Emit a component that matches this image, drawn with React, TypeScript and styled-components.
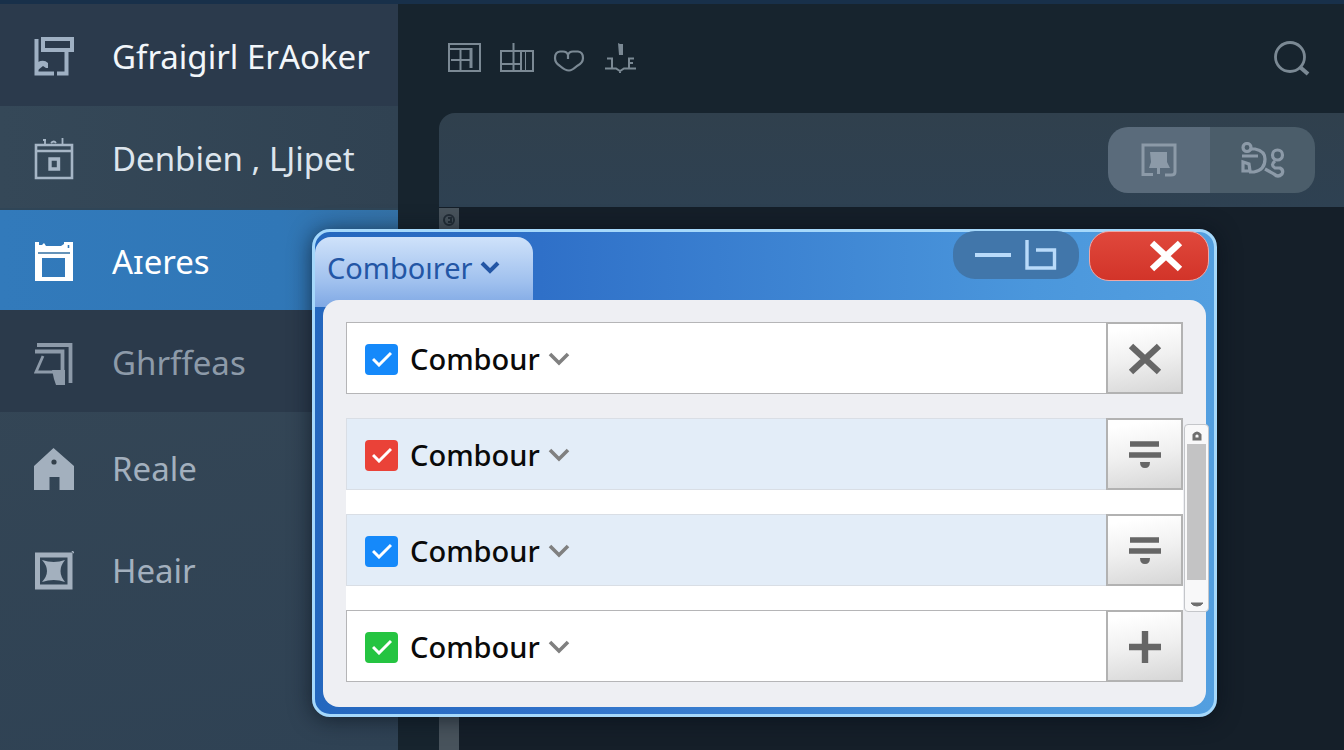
import React, { useState } from 'react';
import styled, { createGlobalStyle } from 'styled-components';

const GlobalStyle = createGlobalStyle`
  * { box-sizing: border-box; }
  body {
    margin: 0;
    background: #17222c;
    font-family: "Noto Sans", "Open Sans", sans-serif;
  }
  button {
    border: 0;
    padding: 0;
    background: none;
    color: inherit;
    font: inherit;
    cursor: pointer;
  }
  svg { display: block; }
`;

type Tone = 'plain' | 'active' | 'dark' | 'muted';

const Page = styled.div`
  position: relative;
  display: flex;
  min-height: 100vh;
  border-top: 4px solid #18304a;
  overflow: hidden;
`;

const Sidebar = styled.nav`
  flex: 0 0 398px;
  display: flex;
  flex-direction: column;
  background: linear-gradient(170deg, #384957, #2f4254);
`;

const NavGroup = styled.div`
  padding-top: 4px;
`;

const rowTones = {
  plain: 'background: linear-gradient(90deg, #354858, #304252); color: #dde5ed; svg { color: #a6b6c6; }',
  active: 'background: linear-gradient(90deg, #327abb, #3077b7 70%, #3573a8); color: #ffffff; border-top: 2px solid #2f4557;',
  dark: 'background: #2b3a4b; color: #8d9aa9;',
  muted: 'color: #a3b0be;',
};

const NavLink = styled.a<{ $tone: Tone }>`
  display: flex;
  align-items: center;
  gap: 38px;
  height: 102px;
  padding: 4px 0 0 34px;
  font-size: 33px;
  line-height: 40px;
  white-space: nowrap;
  text-decoration: none;
  ${p => rowTones[p.$tone]}
`;

const Brand = styled(NavLink)`
  background: #2b3a4c;
  color: #f2f6fa;
  svg { color: #9fb0c3; }
`;

const Main = styled.main`
  flex: 1;
  min-width: 0;
  display: flex;
  flex-direction: column;
  background: #17242e;
`;

const Toolbar = styled.header`
  display: flex;
  align-items: center;
  gap: 18px;
  height: 109px;
  padding: 0 34px 2px 50px;
  color: #7b8994;
`;

const Spacer = styled.span`
  flex: 1;
`;

const PanelBar = styled.div`
  display: flex;
  justify-content: flex-end;
  align-items: center;
  height: 94px;
  margin-left: 41px;
  padding-right: 29px;
  border-radius: 16px 0 0 0;
  background: linear-gradient(180deg, #30404d, #2e4152);
`;

const Segments = styled.div`
  display: flex;
  overflow: hidden;
  border-radius: 20px;
`;

const Segment = styled.button<{ $on?: boolean }>`
  display: grid;
  place-items: center;
  width: ${p => (p.$on ? 102 : 105)}px;
  height: 66px;
  background: ${p => (p.$on ? '#5a6b7b' : '#4b5d6a')};
  color: #8c9aa8;
`;

const Canvas = styled.section`
  flex: 1;
  display: flex;
  margin-left: 41px;
  padding-top: 1px;
  background: #151f29;
`;

const Rail = styled.div`
  width: 20px;
  padding: 4px 3px;
  background: #48535c;
  color: #222d36;
`;

const Dialog = styled.div`
  position: absolute;
  top: 225px;
  left: 312px;
  right: 127px;
  padding: 5px 8px 7px 8px;
  border: 3px solid #a5d8fb;
  border-radius: 18px;
  background: linear-gradient(90deg, #2467be, #2f70c8 25%, #4b97dc 80%, #539fe0);
  box-shadow: 0 2px 22px rgba(6, 14, 24, 0.65);
`;

const TitleBar = styled.div`
  display: flex;
  align-items: flex-start;
  height: 63px;
  margin: 0 -3px 0 -8px;
`;

const Tab = styled.button`
  display: flex;
  align-items: center;
  gap: 7px;
  width: 218px;
  height: 70px;
  padding: 0 0 8px 12px;
  border-radius: 16px 16px 0 0;
  background: linear-gradient(180deg, #cfe2fa, #9fc0ee 65%, #7fa8e4);
  color: #2356a5;
  font-size: 29px;
  line-height: 40px;
`;

const Controls = styled.div`
  display: flex;
  gap: 10px;
  margin-top: -6px;
`;

const PillGroup = styled.div`
  display: flex;
  align-items: center;
  gap: 14px;
  width: 126px;
  height: 48px;
  padding-left: 22px;
  border-radius: 22px;
  background: #4176aa;
  color: #b9dbfa;
`;

const CloseButton = styled.button`
  display: flex;
  align-items: center;
  justify-content: flex-end;
  width: 120px;
  height: 50px;
  padding-right: 25px;
  border: 1px solid #f0a7a5;
  border-radius: 20px;
  background: linear-gradient(180deg, #e0483c, #d23429);
  color: #ffffff;
`;

const Body = styled.div`
  position: relative;
  padding: 22px 23px 25px;
  border-radius: 16px;
  background: #eeeff3;
`;

const List = styled.ul`
  display: flex;
  flex-direction: column;
  gap: 24px;
  margin: 0;
  padding: 0;
  list-style: none;
  background: linear-gradient(180deg, #eeeff3 97px, #ffffff 97px);
`;

const Row = styled.li<{ $tinted: boolean }>`
  display: flex;
  height: 72px;
  border: 1px solid ${p => (p.$tinted ? '#d9dee5' : '#b5b5b7')};
  border-right: 0;
  background: ${p => (p.$tinted ? '#e3edf8' : '#ffffff')};
`;

const RowMain = styled.div`
  flex: 1;
  display: flex;
  align-items: center;
  gap: 8px;
  padding: 2px 0 0 18px;
  color: #808080;
`;

const CheckLabel = styled.label`
  display: flex;
  align-items: center;
  gap: 12px;
  color: #0a0a0a;
  font-size: 29px;
  line-height: 40px;
  font-weight: 500;
`;

const CheckStack = styled.span`
  display: grid;
  place-items: center;
  color: #ffffff;
  > * { grid-area: 1 / 1; }
  svg { pointer-events: none; }
`;

const Checkbox = styled.input<{ $color: string }>`
  appearance: none;
  width: 33px;
  height: 31px;
  margin: 0;
  border-radius: 4px;
  background: ${p => p.$color};
`;

const RowAction = styled.button`
  display: grid;
  place-items: center;
  width: 77px;
  margin: -1px 0;
  padding-top: 2px;
  border: 2px solid #b2b2b2;
  background: linear-gradient(170deg, #ffffff 10%, #f0f0f0 50%, #d6d6d6);
  color: #666666;
`;

const ScrollTrack = styled.div`
  position: absolute;
  top: 124px;
  right: -3px;
  display: flex;
  flex-direction: column;
  align-items: center;
  width: 25px;
  height: 188px;
  padding: 6px 2px 4px;
  border: 1px solid #c4c6ca;
  border-radius: 4px;
  background: #f8f8f9;
  color: #6e6e6e;
`;

const ScrollThumb = styled.div`
  width: 19px;
  height: 136px;
  margin-top: 3px;
  background: #c3c3c4;
`;

type IconProps = { w: number; h: number; sw?: number; children: React.ReactNode };

const Icon = ({ w, h, sw = 2, children }: IconProps) => (
  <svg width={w} height={h} viewBox={`0 0 ${w} ${h}`} fill="none" stroke="currentColor" strokeWidth={sw} aria-hidden="true">
    {children}
  </svg>
);

const BrandIcon = () => (
  <Icon w={40} h={42} sw={4}>
    <path d="M2.500 3V37.500H20" />
    <path d="M9 3H38V14H9Z" />
    <path d="M32.500 15V37.500H23" />
    <path d="M4 26q6-3 10 1v5h-2l-3-2-5 4z" fill="currentColor" stroke="none" />
  </Icon>
);

const CalendarIcon = () => (
  <Icon w={40} h={42} sw={2.6}>
    <path d="M2 7H38V40H2Z" />
    <path d="M2 13H38" />
    <path d="M16 21H24.500V31H16Z" strokeWidth="3.4" />
    <path d="M11 1v5M28.500 0v6M9 2h3M17 5q3-3 5 0" strokeWidth="1.8" />
  </Icon>
);

const ArchiveIcon = () => (
  <Icon w={40} h={42}>
    <path
      d="M1 1H5V4H8L10 2L12 5H27L30 3V1H39V40H1ZM8 17V36H31V17Z"
      fill="currentColor"
      fillRule="evenodd"
      stroke="none"
    />
    <path d="M4 12H36" stroke="#3f78a8" strokeWidth="1.6" />
    <path d="M34.500 4v3" stroke="#327abb" strokeWidth="1.6" />
  </Icon>
);

const LayersIcon = () => (
  <Icon w={40} h={43} sw={3.8}>
    <path d="M3 3H36.500V41" />
    <path d="M1 9.500H28.500V31" />
    <path d="M9 14L2 30H21" strokeWidth="2.8" />
    <path d="M18 28H31V43H22L20 37Z" fill="currentColor" stroke="none" />
  </Icon>
);

const HouseIcon = () => (
  <Icon w={40} h={42}>
    <path d="M0 18L19.500 0L40 18V42H25.500V29H15.500V42H0Z" fill="currentColor" stroke="none" />
    <circle cx="20" cy="14" r="2.600" fill="#34404b" stroke="none" />
  </Icon>
);

const FrameIcon = () => (
  <Icon w={40} h={40} sw={5}>
    <path d="M3.500 4H36V36H3.500Z" />
    <path d="M8 9Q20 13 31 9Q22 20 31 31Q20 27 8 31Q18 20 8 9Z" fill="currentColor" stroke="none" />
    <path d="M38 0l2 2" strokeWidth="1.500" />
  </Icon>
);

const GridIcon = () => (
  <Icon w={34} h={30}>
    <path d="M1 1H32V28H1Z" />
    <path d="M2 6H23M12.500 6V28M3 17H22" strokeWidth="2" />
    <path d="M23 5V25" strokeWidth="3" />
  </Icon>
);

const TableIcon = () => (
  <Icon w={34} h={30} sw={2}>
    <path d="M1 8H33V28H1ZM13.500 0V28M21 8V28M1 21H21" />
    <path d="M25.500 8V28" strokeWidth="1" />
  </Icon>
);

const HeartIcon = () => (
  <Icon w={34} h={30} sw={2.2}>
    <path d="M16 16V12Q15 8.500 11 8.500H8Q3 9 3 15Q3 20 8 23Q13 27.500 17 27.500Q20 27.500 25 23Q31 20 31 15Q31 9 26 8.500H21Q17 8.500 16 12" />
  </Icon>
);

const AnchorIcon = () => (
  <Icon w={34} h={30} sw={2}>
    <path d="M1 25.500H12L16 28L20 25.500H32M16 27v3" />
    <path d="M3 15.500H8V25M25 25V15.500H30M25 20h4" />
    <path d="M14 0l2 1h3v11h-4z" fill="currentColor" stroke="none" />
  </Icon>
);

const SearchIcon = () => (
  <Icon w={36} h={36} sw={2.8}>
    <circle cx="16" cy="17" r="14.500" />
    <path d="M26.500 27.500L34 34" strokeWidth="4" />
  </Icon>
);

const PinnedIcon = () => (
  <Icon w={36} h={34} sw={3}>
    <path d="M12 31.500H2V2H34V29Q34 32 30 32H24" />
    <path d="M9 9H26V19L29 25H19V31H16V25H8L10 19Z" fill="currentColor" stroke="none" />
  </Icon>
);

const NodesIcon = () => (
  <Icon w={44} h={36} sw={3.2}>
    <circle cx="6" cy="5.500" r="4" />
    <path d="M10 7H14Q24 9 24 17Q24 28 13 30H8" />
    <path d="M1 14H17" />
    <path d="M2 20V29H9L8 22Z" />
    <circle cx="36.500" cy="13" r="5" />
    <path d="M34 19Q29 23 34 26H39Q43 28 41 32Q37 36 33 32L24 27" />
  </Icon>
);

const Chevron = () => (
  <Icon w={22} h={14} sw={3.6}>
    <path d="M2 2L11 11L20 2" />
  </Icon>
);

const CrossIcon = () => (
  <Icon w={34} h={32} sw={6.4}>
    <path d="M3 3L31 29M31 3L3 29" />
  </Icon>
);

const FilterIcon = () => (
  <Icon w={32} h={28} sw={5.6}>
    <path d="M1 3H30M0 14H32" />
    <path d="M11 21H21Q21 27 16 27Q11 27 11 21Z" fill="currentColor" stroke="none" />
  </Icon>
);

const PlusIcon = () => (
  <Icon w={32} h={32} sw={6.4}>
    <path d="M16 0V32M0 16H32" />
  </Icon>
);

const MinimiseIcon = () => (
  <Icon w={36} h={4} sw={4}>
    <path d="M0 2H36" />
  </Icon>
);

const RestoreIcon = () => (
  <Icon w={32} h={30} sw={3.4}>
    <path d="M2 0V28H29.500V10H11" />
  </Icon>
);

const navTop = [
  { label: 'Denbien , LJipet', tone: 'plain' as Tone, icon: <CalendarIcon /> },
  { label: 'Aɪeres', tone: 'active' as Tone, icon: <ArchiveIcon /> },
  { label: 'Ghrffeas', tone: 'dark' as Tone, icon: <LayersIcon /> },
];

const navBottom = [
  { label: 'Reale', icon: <HouseIcon /> },
  { label: 'Heair', icon: <FrameIcon /> },
];

const options = [
  { id: 'a', color: '#1589fa', tinted: false, action: 'Remove', icon: <CrossIcon /> },
  { id: 'b', color: '#ea4238', tinted: true, action: 'Filter', icon: <FilterIcon /> },
  { id: 'c', color: '#1589fa', tinted: true, action: 'Filter', icon: <FilterIcon /> },
  { id: 'd', color: '#25c441', tinted: false, action: 'Add', icon: <PlusIcon /> },
];

function OptionRow({ option }: { option: (typeof options)[number] }) {
  const [checked, setChecked] = useState(true);
  return (
    <Row $tinted={option.tinted}>
      <RowMain>
        <CheckLabel htmlFor={`option-${option.id}`}>
          <CheckStack>
            <Checkbox
              id={`option-${option.id}`}
              type="checkbox"
              $color={option.color}
              checked={checked}
              onChange={e => setChecked(e.target.checked)}
            />
            {checked && (
              <Icon w={20} h={16} sw={3}>
                <path d="M1 8L7 14L19 2" />
              </Icon>
            )}
          </CheckStack>
          Combour
        </CheckLabel>
        <button type="button" aria-label="Expand">
          <Chevron />
        </button>
      </RowMain>
      <RowAction type="button" aria-label={option.action}>
        {option.icon}
      </RowAction>
    </Row>
  );
}

export default function App() {
  return (
    <>
      <GlobalStyle />
      <Page>
        <Sidebar>
          <Brand href="#home" $tone="plain">
            <BrandIcon />
            Gfraigirl ErAoker
          </Brand>
          {navTop.map(item => (
            <NavLink key={item.label} href="#section" $tone={item.tone}>
              {item.icon}
              {item.label}
            </NavLink>
          ))}
          <NavGroup>
            {navBottom.map(item => (
              <NavLink key={item.label} href="#section" $tone="muted">
                {item.icon}
                {item.label}
              </NavLink>
            ))}
          </NavGroup>
        </Sidebar>
        <Main>
          <Toolbar>
            <button type="button" aria-label="Grid"><GridIcon /></button>
            <button type="button" aria-label="Table"><TableIcon /></button>
            <button type="button" aria-label="Favourite"><HeartIcon /></button>
            <button type="button" aria-label="Anchor"><AnchorIcon /></button>
            <Spacer />
            <button type="button" aria-label="Search"><SearchIcon /></button>
          </Toolbar>
          <PanelBar>
            <Segments>
              <Segment type="button" $on aria-label="Pinned"><PinnedIcon /></Segment>
              <Segment type="button" aria-label="Nodes"><NodesIcon /></Segment>
            </Segments>
          </PanelBar>
          <Canvas>
            <Rail>
              <Icon w={14} h={14}>
                <circle cx="7" cy="8" r="5" />
                <path d="M6 6h3v4h-3" />
              </Icon>
            </Rail>
          </Canvas>
        </Main>
        <Dialog role="dialog" aria-label="Combour">
          <TitleBar>
            <Tab type="button">
              Comboırer
              <Icon w={20} h={14} sw={4}>
                <path d="M2 2L10 10L18 2" />
              </Icon>
            </Tab>
            <Spacer />
            <Controls>
              <PillGroup>
                <button type="button" aria-label="Minimise"><MinimiseIcon /></button>
                <button type="button" aria-label="Restore"><RestoreIcon /></button>
              </PillGroup>
              <CloseButton type="button" aria-label="Close"><CrossIcon /></CloseButton>
            </Controls>
          </TitleBar>
          <Body>
            <List>
              {options.map(option => (
                <OptionRow key={option.id} option={option} />
              ))}
            </List>
            <ScrollTrack>
              <Icon w={10} h={10} sw={3}>
                <path d="M2 8V4Q5 0 8 4V8Z" />
              </Icon>
              <ScrollThumb />
              <Spacer />
              <Icon w={12} h={5} sw={1}>
                <path d="M0 1H12Q10 4 6 4Q2 4 0 1Z" fill="currentColor" />
              </Icon>
            </ScrollTrack>
          </Body>
        </Dialog>
      </Page>
    </>
  );
}
